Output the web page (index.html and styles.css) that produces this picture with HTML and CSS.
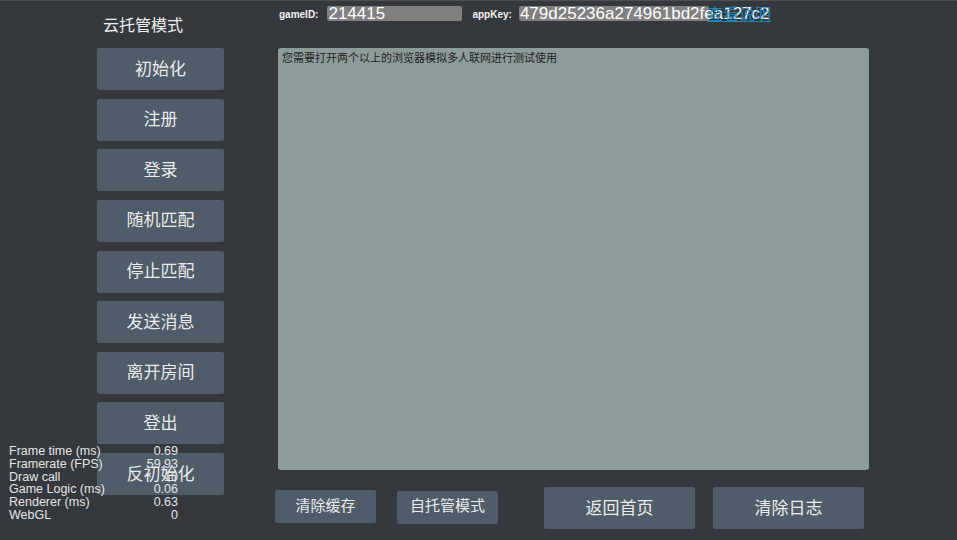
FILE: index.html
```html
<!DOCTYPE html>
<html lang="zh">
<head>
<meta charset="utf-8">
<title>云托管模式</title>
<link rel="stylesheet" href="styles.css">
</head>
<body>
<div class="app">
  <div class="left">
    <div class="title">云托管模式</div>
    <div class="menu">
      <button class="btn">初始化</button>
      <button class="btn">注册</button>
      <button class="btn">登录</button>
      <button class="btn">随机匹配</button>
      <button class="btn">停止匹配</button>
      <button class="btn">发送消息</button>
      <button class="btn">离开房间</button>
      <button class="btn">登出</button>
      <button class="btn">反初始化</button>
    </div>
  </div>
  <div class="main">
    <div class="top-row">
      <span class="label">gameID:</span>
      <span class="field field-id">214415</span>
      <span class="label label-key">appKey:</span>
      <span class="field field-key">479d25236a274961bd2fea127c2<a class="help-link" href="#">查看说明</a></span>
    </div>
    <div class="log">您需要打开两个以上的浏览器模拟多人联网进行测试使用</div>
    <div class="bottom-row">
      <button class="btn btn-small">清除缓存</button>
      <button class="btn btn-small btn-self">自托管模式</button>
      <button class="btn btn-big btn-home">返回首页</button>
      <button class="btn btn-big btn-clear">清除日志</button>
    </div>
  </div>
</div>
<div class="stats">
  <div class="stat"><span>Frame time (ms)</span><span>0.69</span></div>
  <div class="stat"><span>Framerate (FPS)</span><span>59.93</span></div>
  <div class="stat"><span>Draw call</span><span>10</span></div>
  <div class="stat"><span>Game Logic (ms)</span><span>0.06</span></div>
  <div class="stat"><span>Renderer (ms)</span><span>0.63</span></div>
  <div class="stat"><span>WebGL</span><span>0</span></div>
</div>
</body>
</html>
```
FILE: styles.css
```css
html, body {
  margin: 0;
  padding: 0;
}
body {
  width: 957px;
  height: 540px;
  overflow: hidden;
  background: #35393d;
  border-top: 1px solid #4d4f52;
  box-sizing: border-box;
  font-family: "Noto Sans CJK SC", "Liberation Sans", sans-serif;
  color: #ececec;
  position: relative;
}
.app {
  display: flex;
}
.left {
  margin-left: 97px;
  width: 127px;
  display: flex;
  flex-direction: column;
}
.title {
  margin-top: 12px;
  padding-left: 6px;
  font-size: 16px;
  line-height: 22px;
  height: 22px;
  color: #eeeeee;
}
.menu {
  margin-top: 13px;
  display: flex;
  flex-direction: column;
  gap: 8.625px;
}
.btn {
  border: none;
  background: #4f5c69;
  color: #ebebeb;
  border-radius: 2px;
  font-family: "Noto Sans CJK SC", "Liberation Sans", sans-serif;
  font-size: 17px;
  padding: 0 0 4px 0;
  margin: 0;
  height: 42px;
  display: flex;
  align-items: center;
  justify-content: center;
}
.menu .btn {
  width: 127px;
}
.main {
  margin-left: 51px;
  width: 594px;
  display: flex;
  flex-direction: column;
}
.top-row {
  height: 47px;
  display: flex;
  align-items: flex-start;
  padding-left: 4px;
}
.label {
  font-family: "Liberation Sans", sans-serif;
  font-size: 10px;
  font-weight: bold;
  color: #f2f2f2;
  margin-top: 8px;
}
.field {
  margin-top: 5px;
  height: 15px;
  background: #808080;
  border-radius: 2px;
  font-family: "Liberation Sans", sans-serif;
  font-size: 17px;
  line-height: 15px;
  color: #ffffff;
  padding-left: 1px;
  box-sizing: border-box;
  white-space: nowrap;
}
.field-id {
  margin-left: 9px;
  width: 135px;
}
.label-key {
  margin-left: 10px;
}
.field-key {
  margin-left: 7px;
  width: 190px;
  position: relative;
  overflow: visible;
}
.help-link {
  position: absolute;
  left: 188px;
  top: 0;
  font-family: "Noto Sans CJK SC", sans-serif;
  font-size: 16px;
  line-height: 15px;
  color: #1a98d2;
  text-decoration: underline;
  opacity: 0.8;
}
.log {
  margin-left: 3px;
  width: 591px;
  height: 422px;
  background: #8c9c9a;
  border-radius: 3px;
  font-size: 11px;
  line-height: 15px;
  color: #1e2224;
  padding: 2px 4px;
  box-sizing: border-box;
}
.bottom-row {
  display: flex;
  align-items: flex-start;
  margin-top: 17px;
}
.btn-small {
  width: 101px;
  height: 33px;
  font-size: 15px;
  margin-top: 3px;
}
.btn-self {
  margin-left: 21px;
  margin-top: 4px;
  padding-bottom: 7px;
}
.btn-big {
  width: 151px;
  height: 42px;
}
.btn-home {
  margin-left: 46px;
}
.btn-clear {
  margin-left: 18px;
}
.stats {
  position: absolute;
  left: 9px;
  top: 444px;
  width: 169px;
  font-family: "Liberation Sans", sans-serif;
  font-size: 12.5px;
  line-height: 12.8px;
  color: #e4e4e4;
}
.stat {
  display: flex;
  justify-content: space-between;
}
```
